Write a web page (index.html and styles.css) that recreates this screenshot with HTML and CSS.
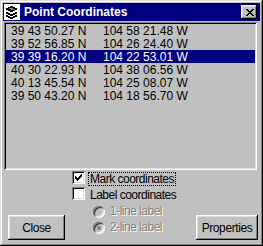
FILE: index.html
```html
<!DOCTYPE html>
<html lang="en">
<head>
    <meta charset="UTF-8">
    <meta name="viewport" content="width=device-width, initial-scale=1.0">
    <title>Point Coordinates</title>
    <link rel="stylesheet" href="styles.css">
</head>
<body>
    <div class="window">
        <div class="titlebar">
            <svg class="app-icon" width="16" height="16" viewBox="0 0 16 16" shape-rendering="crispEdges">
                <rect x="0" y="0" width="16" height="16" fill="#fff"/>
                <path d="M6 2h3v1h2v1h2v2h-2v1h-2v1h-3v-1h-2v-1h-2v-2h2v-1h2z" fill="#000"/>
                <path d="M5 4h4v1h2v1h-4v-1h-2z" fill="#808080"/>
                <path d="M2 8h2v1h2v1h3v-1h2v-1h2v2h-2v1h-2v1h-3v-1h-2v-1h-2z" fill="#000"/>
                <path d="M2 11h2v1h2v1h3v-1h2v-1h2v2h-2v1h-2v1h-3v-1h-2v-1h-2z" fill="#000"/>
            </svg>
            <span class="title">Point Coordinates</span>
            <button class="close-btn" type="button">
                <svg width="8" height="7" viewBox="0 0 8 7" shape-rendering="crispEdges">
                    <path d="M0 0h2v1h-2zM6 0h2v1h-2zM1 1h2v1h-2zM5 1h2v1h-2zM2 2h4v1h-4zM3 3h2v1h-2zM2 4h4v1h-4zM1 5h2v1h-2zM5 5h2v1h-2zM0 6h2v1h-2zM6 6h2v1h-2z" fill="#000"/>
                </svg>
            </button>
        </div>

        <div class="listbox">
            <div class="row"><span class="lat">39 43 50.27 N</span><span>104 58 21.48 W</span></div>
            <div class="row"><span class="lat">39 52 56.85 N</span><span>104 26 24.40 W</span></div>
            <div class="row selected"><span class="lat">39 39 16.20 N</span><span>104 22 53.01 W</span></div>
            <div class="row"><span class="lat">40 30 22.93 N</span><span>104 38 06.56 W</span></div>
            <div class="row"><span class="lat">40 13 45.54 N</span><span>104 25 08.07 W</span></div>
            <div class="row"><span class="lat">39 50 43.20 N</span><span>104 18 56.70 W</span></div>
        </div>

        <div class="bottom">
            <div class="side left">
                <button class="btn btn-close" type="button">Close</button>
            </div>
            <div class="options">
                <div class="opt-row">
                    <span class="checkbox">
                        <svg width="7" height="7" viewBox="0 0 7 7" shape-rendering="crispEdges">
                            <path d="M6 0h1v3h-1v1h-1v1h-1v1h-1v1h-1v-1h-1v-1h-1v-3h1v1h1v1h1v-1h1v-1h1z" fill="#000"/>
                        </svg>
                    </span>
                    <span class="label focus">Mark coordinates</span>
                </div>
                <div class="opt-row">
                    <span class="checkbox"></span>
                    <span class="label">Label coordinates</span>
                </div>
                <div class="opt-row radio-row disabled">
                    <span class="radio"></span>
                    <span class="label">1-line label</span>
                </div>
                <div class="opt-row radio-row disabled">
                    <span class="radio on"></span>
                    <span class="label">2-line label</span>
                </div>
            </div>
            <div class="side right">
                <button class="btn btn-props" type="button">Properties</button>
            </div>
        </div>
    </div>
</body>
</html>
```

FILE: styles.css
```css
body {
    margin: 0;
    font-family: 'Liberation Sans', Arial, sans-serif;
    font-size: 12px;
    color: #000;
}

/* dialog frame, win95 style */
.window {
    width: 263px;
    height: 246px;
    box-sizing: border-box;
    padding: 3px;
    background-color: #c0c0c0;
    box-shadow: inset -1px -1px #000, inset 1px 1px #dfdfdf,
                inset -2px -2px #808080, inset 2px 2px #fff;
    display: flex;
    flex-direction: column;
}

.titlebar {
    height: 18px;
    background-color: #000080;
    display: flex;
    align-items: center;
    color: #fff;
}
.app-icon {
    margin-left: 1px;
    flex: none;
}
.title {
    margin-left: 4px;
    font-weight: bold;
    line-height: 18px;
}
.close-btn {
    margin-left: auto;
    margin-right: 3px;
    width: 16px;
    height: 14px;
    padding: 0 0 0 1px;
    border: none;
    background-color: #c0c0c0;
    box-shadow: inset -1px -1px #000, inset 1px 1px #fff,
                inset -2px -2px #808080, inset 2px 2px #dfdfdf;
    display: flex;
    align-items: center;
    justify-content: center;
}

/* sunken list of coordinates */
.listbox {
    margin: 1px 3px 0 1px;
    height: 148px;
    box-sizing: border-box;
    padding: 2px;
    background-color: #c0c0c0;
    box-shadow: inset 1px 1px #808080, inset -1px -1px #fff,
                inset 2px 2px #000, inset -2px -2px #dfdfdf;
    font-family: 'Liberation Sans Narrow', 'Liberation Sans', sans-serif;
}
.row {
    display: flex;
    height: 12px;
    padding-top: 1px;
    line-height: 13px;
    padding-left: 5px;
    white-space: nowrap;
}
.row .lat {
    width: 92px;
}
.row.selected {
    background-color: #000080;
    color: #fff;
}

.bottom {
    flex: 1;
    display: grid;
    grid-template-columns: 69px 124px 1fr;
}
.side {
    display: flex;
    align-items: flex-end;
    padding-bottom: 3px;
}
.left {
    padding-left: 5px;
}

.btn {
    height: 25px;
    padding: 0;
    border: none;
    font-family: inherit;
    font-size: 12px;
    letter-spacing: -0.4px;
    color: #000;
    background-color: #c0c0c0;
    box-shadow: inset -1px -1px #000, inset 1px 1px #fff,
                inset -2px -2px #808080, inset 2px 2px #dfdfdf;
}
.btn-close {
    width: 57px;
}
.btn-props {
    width: 62px;
}

.options {
    padding-top: 1px;
    letter-spacing: -0.5px;
}
.opt-row {
    height: 16px;
    display: flex;
    align-items: flex-start;
}
.checkbox {
    width: 13px;
    height: 13px;
    box-sizing: border-box;
    flex: none;
    background-color: #fff;
    box-shadow: inset 1px 1px #808080, inset -1px -1px #fff,
                inset 2px 2px #000, inset -2px -2px #dfdfdf;
    display: flex;
    align-items: center;
    justify-content: center;
}
.label {
    margin-left: 3px;
    margin-top: 1px;
    height: 14px;
    box-sizing: border-box;
    border: 1px solid transparent;
    padding: 0 1px;
    line-height: 12px;
    white-space: nowrap;
}
.label.focus {
    border: 1px dotted #000;
}

.radio-row {
    padding-left: 21px;
}
.radio {
    margin-top: 3px;
    width: 12px;
    height: 12px;
    flex: none;
    border-radius: 50%;
    background-color: #c0c0c0;
    box-shadow: inset 1px 1px #808080, inset -1px -1px #fff,
                inset 2px 2px #404040, inset -2px -2px #dfdfdf;
    display: flex;
    align-items: center;
    justify-content: center;
}
.radio.on::after {
    content: '';
    width: 4px;
    height: 4px;
    border-radius: 50%;
    background-color: #808080;
}
.disabled .label {
    color: #808080;
    text-shadow: 1px 1px 0 #fff;
}
```
